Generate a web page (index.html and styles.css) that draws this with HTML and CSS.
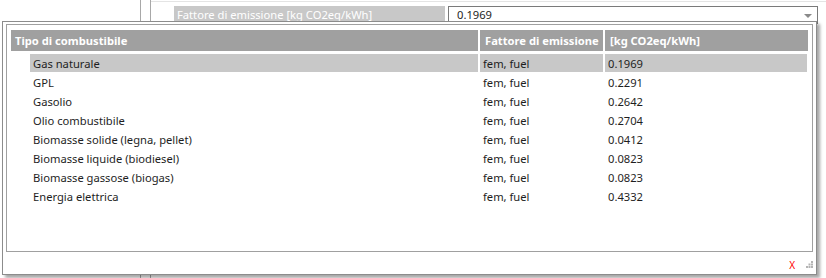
FILE: index.html
```html
<!DOCTYPE html>
<html lang="it">
<head>
<meta charset="UTF-8">
<title>Fattore di emissione</title>
<link rel="stylesheet" href="styles.css">
</head>
<body>

<!-- ───── FORM BEHIND THE POPUP ───── -->
<div class="page">
  <div class="side"></div>
  <div class="splitter"></div>
  <div class="main">
    <div class="field">
      <div class="field-label">Fattore di emissione [kg CO2eq/kWh]</div>
      <div class="combo">
        <span class="combo-value">0.1969</span>
        <span class="combo-arrow"></span>
      </div>
    </div>
  </div>
</div>

<!-- ───── DROPDOWN POPUP ───── -->
<div class="popup">
  <div class="grid">
    <div class="row head">
      <div class="cell">Tipo di combustibile</div>
      <div class="cell">Fattore di emissione</div>
      <div class="cell">[kg CO2eq/kWh]</div>
    </div>
    <div class="row sel">
      <div class="cell">Gas naturale</div><div class="cell">fem, fuel</div><div class="cell">0.1969</div>
    </div>
    <div class="row">
      <div class="cell">GPL</div><div class="cell">fem, fuel</div><div class="cell">0.2291</div>
    </div>
    <div class="row">
      <div class="cell">Gasolio</div><div class="cell">fem, fuel</div><div class="cell">0.2642</div>
    </div>
    <div class="row">
      <div class="cell">Olio combustibile</div><div class="cell">fem, fuel</div><div class="cell">0.2704</div>
    </div>
    <div class="row">
      <div class="cell">Biomasse solide (legna, pellet)</div><div class="cell">fem, fuel</div><div class="cell">0.0412</div>
    </div>
    <div class="row">
      <div class="cell">Biomasse liquide (biodiesel)</div><div class="cell">fem, fuel</div><div class="cell">0.0823</div>
    </div>
    <div class="row">
      <div class="cell">Biomasse gassose (biogas)</div><div class="cell">fem, fuel</div><div class="cell">0.0823</div>
    </div>
    <div class="row">
      <div class="cell">Energia elettrica</div><div class="cell">fem, fuel</div><div class="cell">0.4332</div>
    </div>
  </div>
  <div class="foot">
    <span class="close">X</span>
    <svg class="grip" width="7" height="7" viewBox="0 0 7 7">
      <rect x="5" y="0" width="2" height="2" fill="#b4b4b4"/>
      <rect x="2.5" y="2.5" width="2" height="2" fill="#b4b4b4"/>
      <rect x="5" y="2.5" width="2" height="2" fill="#b4b4b4"/>
      <rect x="0" y="5" width="2" height="2" fill="#b4b4b4"/>
      <rect x="2.5" y="5" width="2" height="2" fill="#b4b4b4"/>
      <rect x="5" y="5" width="2" height="2" fill="#b4b4b4"/>
    </svg>
  </div>
</div>

</body>
</html>
```

FILE: styles.css
```css
/* ───── RESET ───── */
*{margin:0;padding:0;box-sizing:border-box}

body{
  background:#fff;color:#1e1e1e;
  font-family:"Segoe UI","Noto Sans",sans-serif;font-size:11.2px;
  width:826px;height:278px;overflow:hidden;position:relative
}

/* ───── BACKGROUND FORM ───── */
.page{display:flex;height:278px}
.side{width:141px;border-right:1px solid #a8a8a8}
.splitter{width:10px;border-right:1px solid #a8a8a8}
.main{flex:1;padding:4px 0 0 23px;border-top:1px solid #e4e4e4;margin-top:1px}
.field{display:flex;gap:3px;height:18px}
.field-label{
  width:271px;background:#c8c8c8;color:#fff;
  padding-left:3px;line-height:17px
}
.combo{
  width:370px;border:1px solid #7a7a7a;background:#fff;
  display:flex;align-items:center;justify-content:space-between;padding:0 5px 0 8px
}
.combo-value{line-height:16px}
.combo-arrow{
  width:0;height:0;border-left:4px solid transparent;border-right:4px solid transparent;
  border-top:4px solid #8a8a8a;margin-top:1px
}

/* ───── POPUP ───── */
.popup{
  position:absolute;left:2px;top:21px;width:815px;height:254px;
  background:#fff;border:1px solid #8c8c8c;
  box-shadow:3px 3px 3px rgba(0,0,0,.35);
  padding:2px 3px 0 3px;display:flex;flex-direction:column
}
.grid{
  height:228px;border:1px solid #a0a0a0;
  padding:5px 4px 0 4px
}
.row{
  display:grid;grid-template-columns:467px 123px 203px;column-gap:2px;
  height:19px;line-height:20px
}
.row .cell{padding-left:3px;white-space:nowrap;overflow:hidden}
.row .cell:first-child{margin-left:19px}

.head{height:21px;line-height:21px;margin-bottom:3px}
.head .cell{background:#a0a0a0;color:#fff;font-weight:700;padding-left:4px}
.head .cell:first-child{margin-left:0}
.head .cell + .cell{padding-left:5px}

.sel .cell{background:#c8c8c8;height:18px;line-height:19px}
.sel .cell:last-child{margin-right:1px}

/* footer with close + grip */
.foot{flex:1;display:flex;justify-content:flex-end;align-items:center;padding:3px 0 0 0}
.close{color:#ff0000;font-size:10px;margin-right:11px;line-height:10px}
.grip{align-self:center;margin-right:0}
```
